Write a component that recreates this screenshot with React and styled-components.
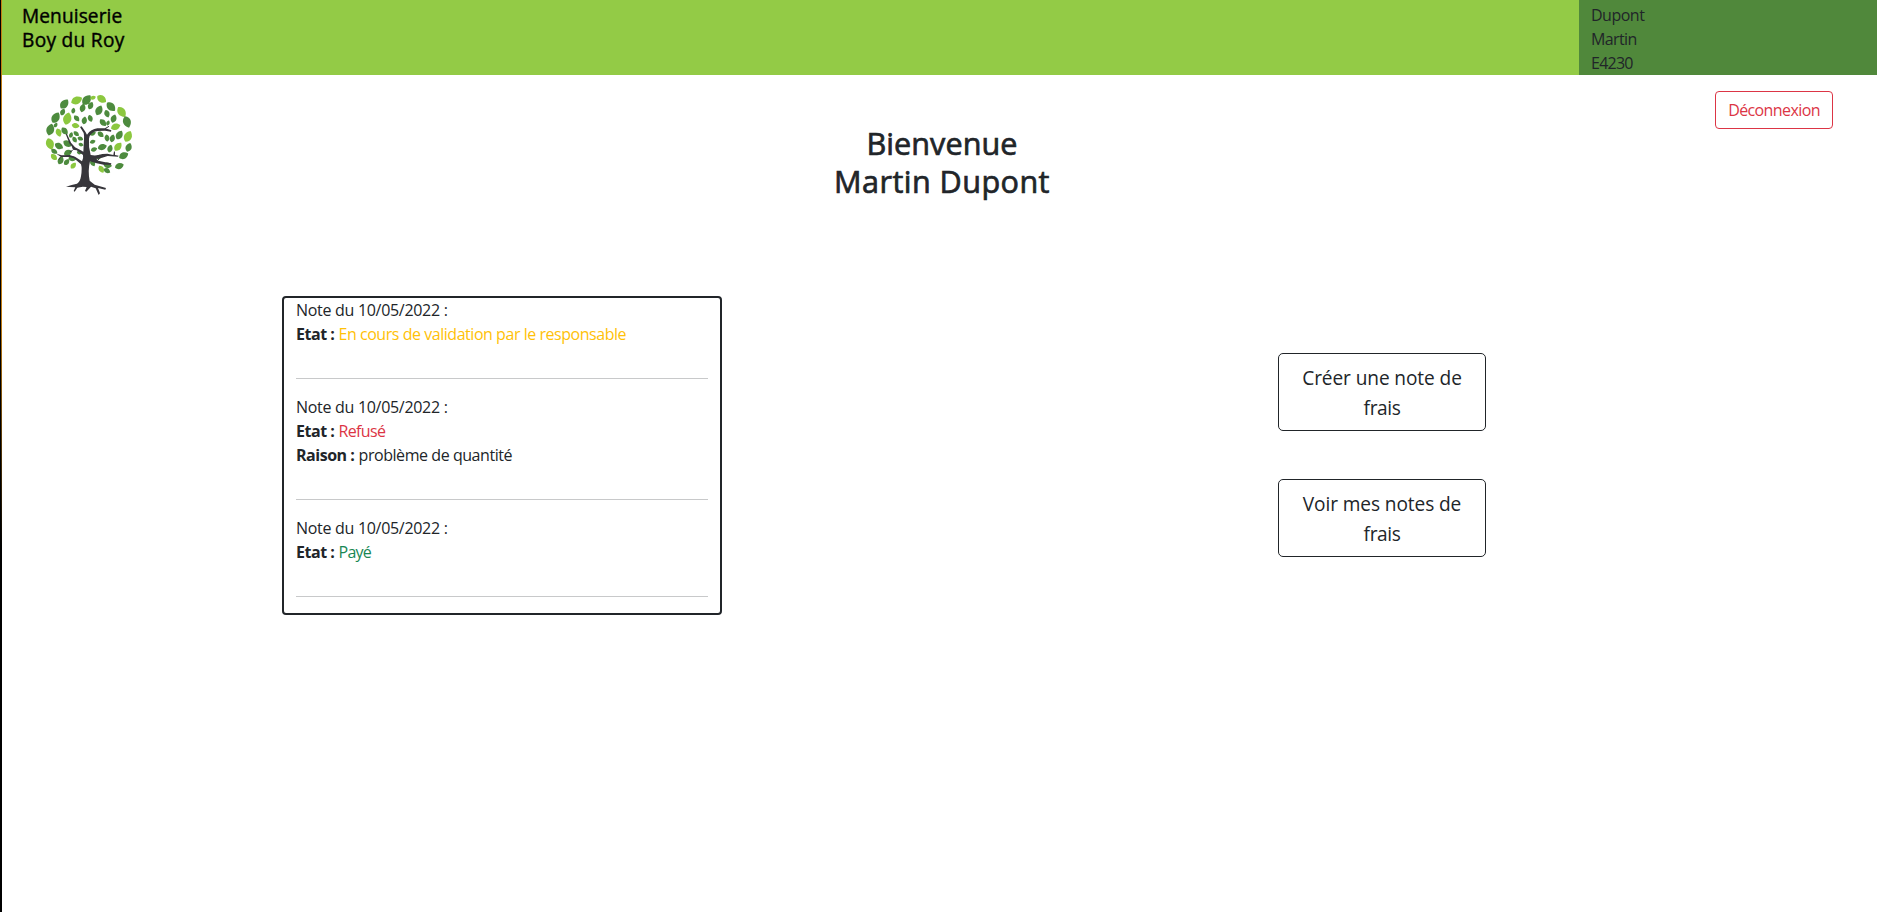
import React from "react";
import styled, { createGlobalStyle } from "styled-components";

const GlobalStyle = createGlobalStyle`
  *, *::before, *::after { box-sizing: border-box; }
  body {
    margin: 0;
    background: #fff;
    color: #212529;
    font-family: "Open Sans", "Noto Sans", sans-serif;
    font-size: 16px;
    line-height: 24px;
  }
`;

const Page = styled.div`
  min-height: 100vh;
  padding-left: 1px;
  border-left: 1px solid #000;
  background:
    linear-gradient(#c07c14 0, #c07c14 35%, #000 60%) left top / 1px 100% no-repeat,
    #fff;
`;

const Header = styled.header`
  display: flex;
  height: 75px;
  background: #93cb46;
`;

const Brand = styled.h1`
  flex: 1;
  margin: 0;
  padding: 4px 0 0 20px;
  color: #000;
  font-size: 19.1px;
  font-weight: 400;
  line-height: 24px;
  -webkit-text-stroke: 0.4px currentColor;
`;

const UserPanel = styled.div`
  width: 298px;
  padding: 3px 12px 0;
  background: #50883b;
`;

const Line = styled.span`
  display: block;
  white-space: nowrap;
  letter-spacing: ${(p) => p.$spacing || 0}px;
`;

const Banner = styled.section`
  display: grid;
  grid-template-columns: 1fr auto 1fr;
  align-items: start;
  height: 221px;
  padding: 0 44px 0 33px;
`;

const Logo = styled.svg`
  width: 110px;
  height: 115px;
  margin-top: 11px;
`;

const Welcome = styled.h2`
  margin: 49px 0 0;
  padding-left: 16px;
  font-size: 30.6px;
  font-weight: 400;
  line-height: 38.4px;
  text-align: center;
  -webkit-text-stroke: 0.7px currentColor;
`;

const Button = styled.button`
  font-family: inherit;
  color: ${(p) => p.$color};
  border: 1px solid ${(p) => p.$color};
  background: transparent;
  cursor: pointer;
`;

const LogoutButton = styled(Button)`
  justify-self: end;
  width: 118px;
  height: 38px;
  margin-top: 16px;
  padding: 0;
  border-radius: 4px;
  font-size: 16px;
  line-height: 24px;
  letter-spacing: -0.6px;
`;

const ActionButton = styled(Button)`
  width: 208px;
  padding: 9px 0 7px;
  border-radius: 5px;
  font-size: 19.1px;
  line-height: 30px;
`;

const Main = styled.main`
  display: flex;
  align-items: flex-start;
  justify-content: space-between;
  padding: 0 391px 0 280px;
`;

const NotesCard = styled.section`
  width: 440px;
  padding: 0 12px;
  border: 2px solid #212529;
  border-radius: 4px;
`;

const Note = styled.article`
  padding-bottom: 32px;
  margin-bottom: 16px;
  border-bottom: 1px solid #c8c9ca;
`;

const Status = styled.span`
  color: ${(p) => p.$color};
  letter-spacing: ${(p) => p.$spacing || 0}px;
`;

const Label = styled.strong`
  font-weight: 700;
  letter-spacing: -0.48px;
`;

const Actions = styled.div`
  display: flex;
  flex-direction: column;
  gap: 48px;
  padding-top: 57px;
`;

const DARK = "#4d8b3e";
const LIGHT = "#8cc83f";

// Each leaf: centre x, centre y, length, angle, colour
const LEAVES = [
  [125, 43, 36, -25, LIGHT], [155, 42, 36, -50, DARK], [174, 35, 18, -20, LIGHT],
  [200, 39, 32, 35, LIGHT], [228, 62, 34, 45, DARK], [88, 54, 34, -50, DARK],
  [62, 95, 36, -60, DARK], [97, 98, 38, -75, LIGHT], [115, 74, 18, -80, DARK],
  [143, 66, 26, -75, DARK], [167, 59, 24, -65, DARK], [192, 73, 32, -65, DARK],
  [216, 83, 24, 70, DARK], [83, 78, 22, -65, DARK], [260, 78, 36, 55, LIGHT],
  [236, 98, 26, -70, DARK], [276, 108, 36, 70, DARK], [46, 131, 36, -75, DARK],
  [62, 117, 16, -60, DARK], [71, 140, 26, 70, LIGHT], [89, 135, 26, 50, DARK],
  [125, 97, 22, 50, DARK], [148, 103, 24, -80, DARK], [166, 97, 22, 70, DARK],
  [204, 110, 26, 50, DARK], [122, 119, 24, 10, LIGHT], [242, 122, 30, -20, LIGHT],
  [108, 147, 18, -70, DARK], [124, 143, 20, 40, DARK], [219, 111, 16, -70, DARK],
  [279, 151, 36, -65, LIGHT], [253, 147, 30, -60, DARK], [232, 157, 24, -75, DARK],
  [216, 156, 22, 80, DARK], [197, 145, 22, 40, DARK], [173, 142, 20, -20, DARK],
  [173, 167, 18, -20, DARK], [202, 183, 28, -15, DARK], [177, 190, 20, -20, DARK],
  [249, 182, 30, -50, LIGHT], [225, 188, 24, -75, DARK], [281, 184, 28, -70, DARK],
  [45, 174, 36, 70, LIGHT], [72, 180, 28, 30, DARK], [97, 173, 28, 35, DARK],
  [119, 161, 20, 60, DARK], [136, 158, 18, 20, DARK], [138, 176, 16, 20, DARK],
  [57, 213, 24, 45, LIGHT], [58, 196, 22, 35, DARK], [77, 223, 26, -65, DARK],
  [95, 228, 22, -50, DARK], [115, 239, 22, -50, LIGHT], [112, 218, 24, 10, DARK],
  [99, 200, 26, -20, DARK], [133, 200, 16, 20, DARK], [266, 209, 30, -25, DARK],
  [253, 240, 28, -20, DARK], [199, 250, 24, 60, LIGHT], [216, 254, 22, 30, DARK],
  [218, 238, 26, 10, DARK], [173, 231, 22, 60, DARK], [192, 213, 20, -20, DARK],
];

function Leaf({ x, y, length, angle, fill }) {
  const h = length / 2;
  const w = length * 0.48;
  return (
    <path
      d={`M${-h} 0C${-h * 0.5} ${-w} ${h * 0.5} ${-w * 0.8} ${h} 0C${h * 0.5} ${w * 0.8} ${-h * 0.5} ${w} ${-h} 0Z`}
      transform={`translate(${x} ${y}) rotate(${angle})`}
      fill={fill}
    />
  );
}

function TreeLogo() {
  return (
    <Logo viewBox="0 0 330 345" role="img" aria-label="Arbre">
      {LEAVES.map(([x, y, length, angle, fill], i) => (
        <Leaf key={i} x={x} y={y} length={length} angle={angle} fill={fill} />
      ))}
      <path
        fill="#37363b"
        d="M147 160Q148 150 146 141L135 123L140 121L151 137L156 146Q168 129 187 127L211 127L229 133L228 137L210 134L188 135Q165 138 162 158Q160 184 167 207Q184 211 202 204L217 203L235 207L237 196L240 197L240 207L251 209L249 212L218 210Q202 217 184 218L190 224L211 229L229 232L228 236L206 236L185 232L165 226Q158 255 164 284L179 296L213 306L211 311L189 306L195 322L191 327L182 307L168 302L154 317L150 315L155 303L143 302L127 305L119 317L116 315L121 304L104 303L93 302L110 297L126 293Q135 289 138 271Q142 247 138 235L117 217L103 213L78 213L64 203L80 208L104 207L120 212L141 226Q146 215 144 207L125 193L114 191L110 181L103 172L92 144L96 144L108 170L120 184L136 192L145 197Z"
      />
      <path d="M113 193L104 198M210 128L222 121M77 212L72 221M190 222L194 213" fill="none" stroke="#37363b" strokeWidth="3" />
    </Logo>
  );
}

const NOTES = [
  {
    date: "10/05/2022",
    status: "En cours de validation par le responsable",
    color: "#ffc107",
    spacing: -0.46,
  },
  {
    date: "10/05/2022",
    status: "Refusé",
    color: "#dc3545",
    spacing: -0.65,
    reason: "problème de quantité",
  },
  { date: "10/05/2022", status: "Payé", color: "#198754", spacing: -0.75 },
];

export default function App() {
  return (
    <>
      <GlobalStyle />
      <Page>
        <Header>
          <Brand>
            <Line $spacing={0.1}>Menuiserie</Line>
            <Line $spacing={0.3}>Boy du Roy</Line>
          </Brand>
          <UserPanel>
            <Line $spacing={-0.5}>Dupont</Line>
            <Line $spacing={-0.6}>Martin</Line>
            <Line $spacing={-0.75}>E4230</Line>
          </UserPanel>
        </Header>
        <Banner>
          <TreeLogo />
          <Welcome>
            <Line $spacing={0.05}>Bienvenue</Line>
            <Line $spacing={0.45}>Martin Dupont</Line>
          </Welcome>
          <LogoutButton $color="#dc3545">Déconnexion</LogoutButton>
        </Banner>
        <Main>
          <NotesCard>
            {NOTES.map((note, i) => (
              <Note key={i}>
                <Line $spacing={-0.3}>Note du {note.date} :</Line>
                <Line>
                  <Label>Etat :</Label>{" "}
                  <Status $color={note.color} $spacing={note.spacing}>{note.status}</Status>
                </Line>
                {note.reason && (
                  <Line>
                    <Label>Raison :</Label> <Status $spacing={-0.44}>{note.reason}</Status>
                  </Line>
                )}
              </Note>
            ))}
          </NotesCard>
          <Actions>
            <ActionButton $color="#212529">
              <Line $spacing={-0.1}>Créer une note de</Line>
              <Line $spacing={-0.4}>frais</Line>
            </ActionButton>
            <ActionButton $color="#212529">
              <Line $spacing={-0.1}>Voir mes notes de</Line>
              <Line $spacing={-0.4}>frais</Line>
            </ActionButton>
          </Actions>
        </Main>
      </Page>
    </>
  );
}
